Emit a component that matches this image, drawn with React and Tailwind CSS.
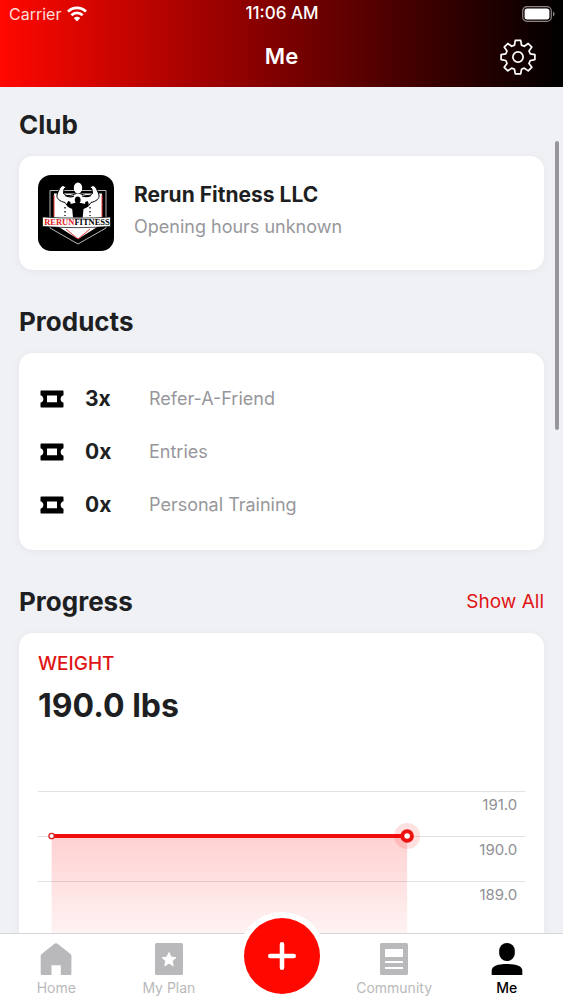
const products = [
  { count: "3x", name: "Refer-A-Friend" },
  { count: "0x", name: "Entries" },
  { count: "0x", name: "Personal Training" },
];

const gridLines = [
  { y: 15, label: "191.0" },
  { y: 60, label: "190.0" },
  { y: 105, label: "189.0" },
];

function WifiIcon() {
  return (
    <svg viewBox="0 0 20 16" className="h-4 w-5" fill="none" stroke="white" strokeWidth="2.7">
      <path d="M1 5.6C6 .6 14 .6 19 5.6" />
      <path d="M4.4 9.2c3.2-3.2 8-3.2 11.2 0" />
      <path d="M10 15.4l-3.2-3.3c1.8-1.7 4.6-1.7 6.4 0z" fill="white" stroke="none" />
    </svg>
  );
}

function BatteryIcon() {
  return (
    <svg viewBox="0 0 33 16" className="h-4 w-[33px]">
      <rect x="0.7" y="0.7" width="28.6" height="14.6" rx="4.4" fill="none" stroke="#8d8585" strokeWidth="1.2" />
      <rect x="2.6" y="2.6" width="24.8" height="10.8" rx="2.6" fill="white" />
      <path d="M31 5.6c2 .8 2 4 0 4.8z" fill="#8d8585" />
    </svg>
  );
}

function GearIcon() {
  return (
    <svg viewBox="0 0 36 36" className="size-9" fill="none" stroke="white" strokeWidth="1.7" strokeLinejoin="round">
      <path d="M15.3 1.4h5.4l.8 4.7 2.8 1.2 3.9-2.8 3.6 3.6-2.8 3.9 1.3 2.9 4.6.8v4.9l-4.6.9-1.3 2.9 2.8 3.9-3.6 3.6-3.9-2.8-2.8 1.2-.8 4.5h-5.4l-.8-4.5-2.8-1.2-3.9 2.8-3.6-3.6 2.8-3.9-1.2-2.9-4.7-.9v-4.9l4.7-.8 1.2-2.9-2.8-3.9 3.6-3.6 3.9 2.8 2.8-1.2z" />
      <circle cx="18" cy="18" r="5.1" />
    </svg>
  );
}

function TicketIcon() {
  return (
    <svg viewBox="0 0 24 18" className="h-[18px] w-6">
      <path
        fillRule="evenodd"
        d="M1.500.5h21c.6 0 1 .4 1 1v3.700c-1.600.4-2.900 1.900-2.900 3.800s1.300 3.400 2.900 3.800v3.700c0 .6-.4 1-1 1h-21c-.6 0-1-.4-1-1v-3.700c1.600-.4 2.900-1.900 2.900-3.800S2.100 5.600.5 5.200V1.500c0-.6.4-1 1-1zM7 5.600v6.600h10V5.600z"
      />
    </svg>
  );
}

function ClubLogo() {
  return (
    <svg viewBox="0 0 76 76" className="size-[76px] shrink-0" role="img" aria-label="Rerun Fitness logo">
      <rect width="76" height="76" rx="13" fill="black" />
      <path d="M12 15.500h56V53L40 69 12 53z" fill="none" stroke="#b9b9b9" strokeWidth="1" />
      <path d="M16 18.500h48V49L40 64 16 49z" fill="white" />
      <path d="M16 20v22M64 20v22M28 54l12 10 12-10" fill="none" stroke="#e23b3b" strokeWidth="1" />
      {/* large figure, flexing */}
      <path
        d="M40 18c-4 1-7 3-10 2.500-2 0-3.500-1-4.500-2l.5-4.500 1.500-1.500c0-1.800-3-2.500-4.500-1-1.500 2-3 5-4 8.500-.8 3.500 3 6.500 8 7.500l3 4h20l3-4c5-1 8.800-4 8-7.500-1-3.500-2.500-6.500-4-8.500-1.500-1.500-4.500-.8-4.500 1l1.500 1.500.5 4.500c-1 1-2.500 2-4.500 2-3 .5-6-1.500-10-2.500z"
        fill="white"
        stroke="black"
        strokeWidth="1"
      />
      <ellipse cx="40" cy="13" rx="4.200" ry="5.500" fill="white" />
      <path d="M27 20.500c4 2 7 1.500 9 .5M44 21c3 1 6 1 9-.5" fill="none" stroke="black" strokeWidth="1.300" />
      <path d="M27 32v9M52 32v9" fill="none" stroke="black" strokeWidth="1.300" strokeDasharray="1.500 2.500" />
      {/* small figure in front */}
      <ellipse cx="39.700" cy="25" rx="2.900" ry="3.500" />
      <path d="M36.500 28h6.500l4 1 .3-2 2-1c2 2 2 5-.5 6.500l-3.300 1.500-.8 8.500H35l-.8-8.500-3.300-1.500c-2.500-1.500-2.500-4.500-.5-6.500l2 1 .3 2z" />
      <path d="M4.500 42c23 1.500 47 1.500 68 0v9.500c-22 1.500-45 1.500-68 0z" fill="white" stroke="black" strokeWidth="0.7" />
      <text
        x="39"
        y="50.300"
        textAnchor="middle"
        fontFamily="'Liberation Serif', serif"
        fontWeight="700"
        fontSize="8.500"
      >
        <tspan fill="#e01b22">RERUN</tspan>
        <tspan fill="black">FITNESS</tspan>
      </text>
    </svg>
  );
}

function WeightChart() {
  return (
    <svg className="block h-[180px] w-full" role="img" aria-label="Weight over time">
      <defs>
        <linearGradient id="weightFill" x1="0" y1="0" x2="0" y2="1">
          <stop offset="0" stopColor="#ff0000" stopOpacity="0.18" />
          <stop offset="1" stopColor="#ff0000" stopOpacity="0.02" />
        </linearGradient>
      </defs>
      {gridLines.map((line) => (
        <g key={line.label}>
          <line x1="0" x2="100%" y1={line.y + 0.5} y2={line.y + 0.5} stroke="#e1e1e4" />
          <text x="98.400%" y={line.y + 19} textAnchor="end" fontSize="15" fill="#8f8f94">
            {line.label}
          </text>
        </g>
      ))}
      <rect x="2.800%" y="60" width="73%" height="120" fill="url(#weightFill)" />
      <line x1="2.800%" x2="75.800%" y1="60" y2="60" stroke="#f20d0d" strokeWidth="4" />
      <circle cx="2.800%" cy="60" r="2.700" fill="white" stroke="#d92020" strokeWidth="1.300" />
      <circle cx="75.800%" cy="60" r="13" fill="#ff0000" fillOpacity="0.12" />
      <circle cx="75.800%" cy="60" r="4.800" fill="white" stroke="#ee1111" strokeWidth="4" />
    </svg>
  );
}

function HomeIcon() {
  return (
    <svg viewBox="0 0 32 32" className="size-8" fill="currentColor">
      <path d="M14.800.6a2 2 0 0 1 2.400 0L30.500 11c.6.5.9 1 .9 1.800V30.500c0 1-.6 1.500-1.500 1.500h-9.100v-9.700h-9.300V32H2.200c-.9 0-1.500-.5-1.500-1.500V12.800c0-.8.300-1.300.9-1.800z" />
    </svg>
  );
}

function PlanIcon() {
  return (
    <svg viewBox="0 0 32 32" className="size-8" fill="currentColor">
      <rect x="2" width="28" height="32" rx="1.500" />
      <path
        d="M16 9.500l2 4.600 5 .5-3.800 3.300 1.100 4.900-4.300-2.600-4.300 2.600 1.100-4.900-3.800-3.300 5-.5z"
        fill="white"
        stroke="white"
        strokeWidth="1"
        strokeLinejoin="round"
      />
    </svg>
  );
}

function CommunityIcon() {
  return (
    <svg viewBox="0 0 32 32" className="size-8" fill="currentColor">
      <rect x="2" width="28" height="32" rx="1.500" />
      <path d="M7 6h18v8H7zM7 18h18v2H7zM7 24h18v2H7z" fill="white" />
    </svg>
  );
}

function PersonIcon() {
  return (
    <svg viewBox="0 0 32 32" className="size-8" fill="currentColor">
      <rect x="8.200" width="15.600" height="18" rx="7.600" />
      <path d="M.7 32v-4.500C.7 23 7 21 16 21s15.300 2 15.300 6.500V32z" />
    </svg>
  );
}

function TabLink({ icon, label, active }) {
  return (
    <a
      href="#"
      aria-current={active ? "page" : undefined}
      className={`flex flex-col items-center gap-[3px] pt-[9px] text-sm leading-5 ${
        active ? "font-medium text-black" : "text-[#b9b9bb]"
      }`}
    >
      {icon}
      {label}
    </a>
  );
}

function Card({ children, className = "" }) {
  return (
    <div className={`rounded-[14px] bg-white px-[19px] py-[19px] shadow-[0_1px_8px_rgba(0,0,0,0.05)] ${className}`}>
      {children}
    </div>
  );
}

export default function App() {
  return (
    <div className="flex h-screen flex-col overflow-hidden bg-[#f0f1f5] font-['Inter','Liberation_Sans',sans-serif] text-[#1e1f22]">
      <header className="shrink-0 bg-linear-to-r/srgb from-[#ff0800] via-[#7d0000] to-black pb-0.5 text-white">
        <div className="grid h-7 grid-cols-3 items-center pr-2 pl-[9px] text-[17px]">
          <div className="flex items-center gap-1.5">
            <span className="text-base text-[#ffdcd8]">Carrier</span>
            <WifiIcon />
          </div>
          <span className="text-center font-medium">11:06 AM</span>
          <div className="flex justify-end">
            <BatteryIcon />
          </div>
        </div>
        <div className="grid h-[57px] grid-cols-[1fr_auto_1fr] items-center px-[27px]">
          <h1 className="col-start-2 text-[22px] font-semibold">Me</h1>
          <button type="button" aria-label="Settings" className="justify-self-end">
            <GearIcon />
          </button>
        </div>
      </header>

      <div className="relative min-h-0 flex-1">
        <main className="h-full overflow-hidden px-[19px] pt-[22px]">
          <section>
            <h2 className="mb-[15px] text-[26px] leading-8 font-bold">Club</h2>
            <Card className="flex gap-5">
              <ClubLogo />
              <div className="pt-1.5">
                <h3 className="text-[21px] leading-7 font-bold">Rerun Fitness LLC</h3>
                <p className="mt-1 text-lg leading-7 text-[#97979b]">Opening hours unknown</p>
              </div>
            </Card>
          </section>

          <section className="mt-9">
            <h2 className="mb-[15px] text-[26px] leading-8 font-bold">Products</h2>
            <Card>
              <ul>
                {products.map((product) => (
                  <li key={product.name} className="flex h-[53px] items-center pl-0.5">
                    <TicketIcon />
                    <span className="ml-[21px] w-16 text-[21px] font-bold">{product.count}</span>
                    <span className="text-lg text-[#97979b]">{product.name}</span>
                  </li>
                ))}
              </ul>
            </Card>
          </section>

          <section className="mt-9">
            <div className="mb-[15px] flex items-center justify-between">
              <h2 className="text-[26px] leading-8 font-bold">Progress</h2>
              <a href="#" className="text-[19px] leading-8 text-[#e01414]">
                Show All
              </a>
            </div>
            <Card>
              <h3 className="text-[19px] leading-6 font-medium text-[#e01414]">WEIGHT</h3>
              <p className="mt-2.5 mb-[50px] text-[32px] leading-10 font-bold">190.0 lbs</p>
              <WeightChart />
            </Card>
          </section>
        </main>
        {/* scroll indicator */}
        <div className="absolute top-[54px] right-1 h-[289px] w-1 rounded-full bg-[#97979b]" />
      </div>

      <nav className="relative grid h-[67px] shrink-0 grid-cols-5 border-t border-[#d6d6da] bg-white">
        <TabLink icon={<HomeIcon />} label="Home" />
        <TabLink icon={<PlanIcon />} label="My Plan" />
        <button
          type="button"
          aria-label="Add"
          className="absolute -top-4 left-1/2 flex size-[76px] -translate-x-1/2 items-center justify-center rounded-full bg-[#ff0800] ring-[6px] ring-white"
        >
          <svg viewBox="0 0 28 28" className="size-7" stroke="white" strokeWidth="4.500" strokeLinecap="round">
            <path d="M14 2.250v23.500M2.250 14h23.500" />
          </svg>
        </button>
        <div />
        <TabLink icon={<CommunityIcon />} label="Community" />
        <TabLink icon={<PersonIcon />} label="Me" active />
      </nav>
    </div>
  );
}
